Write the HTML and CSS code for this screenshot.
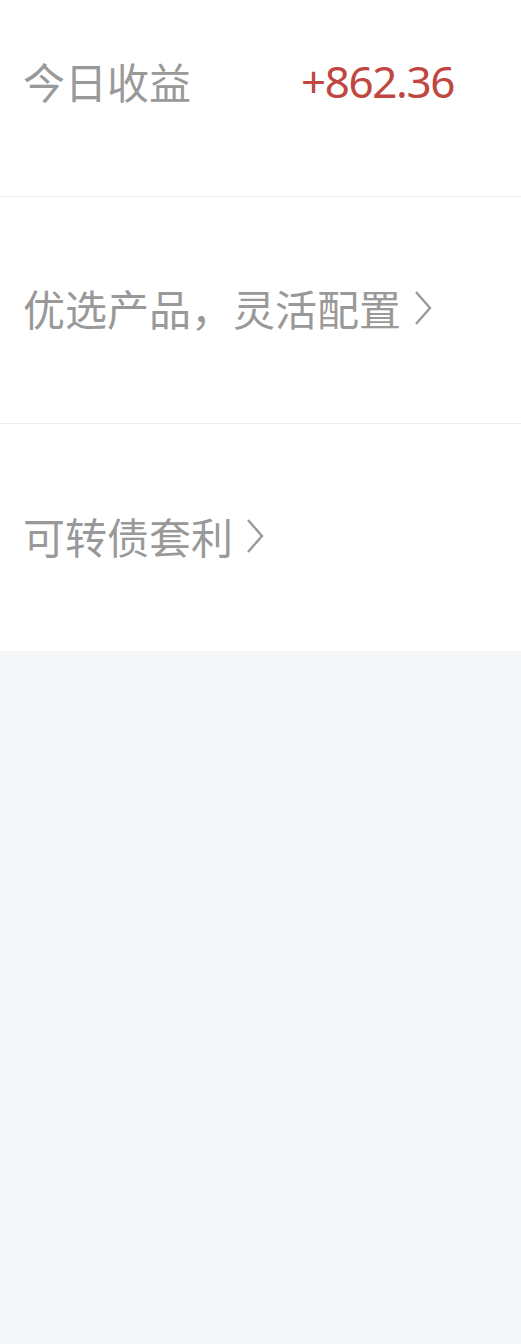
FILE: index.html
```html
<!DOCTYPE html>
<html lang="zh-CN">
<head>
<meta charset="utf-8">
<link rel="stylesheet" href="styles.css">
</head>
<body>
<div class="card">
  <div class="row row-first">
    <span class="label">今日收益</span>
    <span class="value">+862.36</span>
  </div>
  <div class="row">
    <span class="label">优选产品，灵活配置</span>
    <svg class="chev" viewBox="0 0 20 36" width="20" height="36"><path d="M3 2 L17 18 L3 34" fill="none" stroke="#9a9a9a" stroke-width="2.4"/></svg>
  </div>
  <div class="row row-last">
    <span class="label">可转债套利</span>
    <svg class="chev" viewBox="0 0 20 36" width="20" height="36"><path d="M3 2 L17 18 L3 34" fill="none" stroke="#9a9a9a" stroke-width="2.4"/></svg>
  </div>
</div>
</body>
</html>
```

FILE: styles.css
```css
html, body {
  margin: 0;
  padding: 0;
  background: #f5f6f8;
  font-family: "Noto Sans CJK SC", "Noto Sans", sans-serif;
}
.card {
  background: #fff;
}
.row {
  display: flex;
  align-items: center;
  height: 227px;
  padding-left: 23px;
  padding-bottom: 4px;
  border-bottom: 1px solid #eeeeee;
  box-sizing: border-box;
}
.row-first {
  height: 197px;
  align-items: flex-start;
  padding-top: 51px;
  padding-bottom: 0;
}
.row-last {
  border-bottom: none;
  height: 227px;
}
.label {
  font-size: 42px;
  line-height: 60px;
  color: #999999;
}
.value {
  margin-left: 110px;
  font-family: "Noto Sans", sans-serif;
  font-size: 44px;
  letter-spacing: -1.4px;
  line-height: 60px;
  color: #c0473f;
}
.chev {
  margin-left: 12px;
}
```
